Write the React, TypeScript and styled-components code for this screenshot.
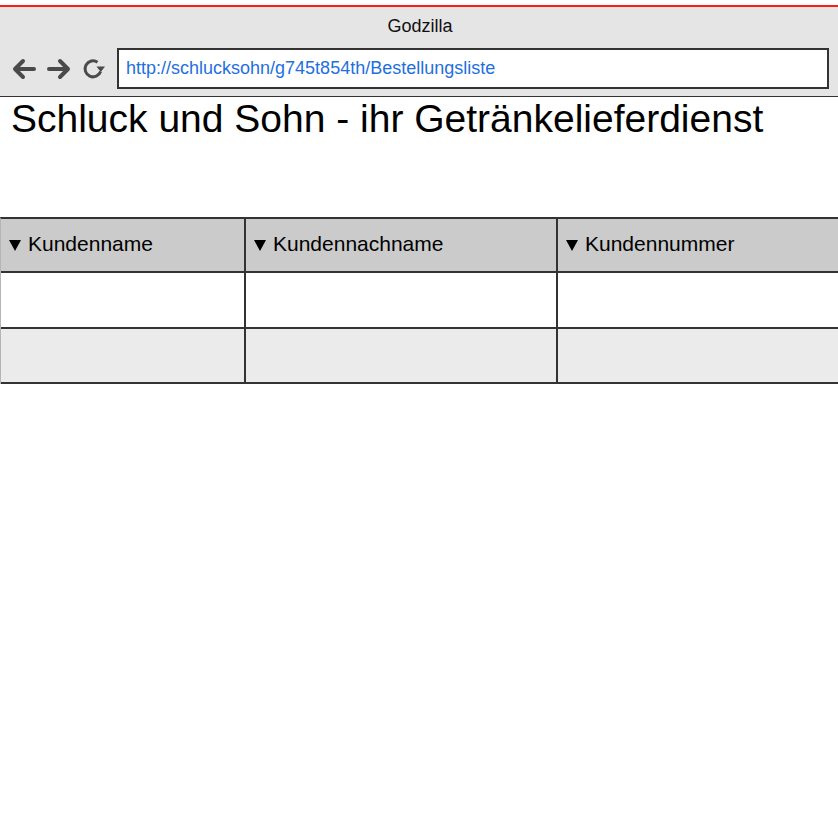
import React from "react";
import styled, { createGlobalStyle } from "styled-components";

const Global = createGlobalStyle`
  html, body { margin: 0; padding: 0; background: #ffffff; }
  body { font-family: "Liberation Sans", Arial, sans-serif; color: #000; overflow: hidden; }
`;

const Page = styled.div`
  width: 838px;
  min-height: 814px;
  padding-top: 5px;
  box-sizing: border-box;
`;

const Chrome = styled.div`
  background: #e5e5e5;
  border-top: 2px solid #ff1a1a;
  border-bottom: 1px solid #333;
  padding: 9px 9px 7px 11px;
  display: flex;
  flex-direction: column;
  gap: 12px;
`;

const WindowTitle = styled.div`
  text-align: center;
  font-size: 18px;
  line-height: 20px;
  color: #111;
`;

const NavRow = styled.div`
  display: flex;
  align-items: center;
  height: 41px;
`;

const NavButton = styled.span<{ $w: number; $gap: number }>`
  display: inline-flex;
  width: ${(p) => p.$w}px;
  margin-right: ${(p) => p.$gap}px;
  color: #4a4a4a;
  svg { display: block; }
`;

const AddressBar = styled.div`
  flex: 1;
  height: 100%;
  box-sizing: border-box;
  background: #fff;
  border: 2px solid #333;
  display: flex;
  align-items: center;
  padding-left: 7px;
  font-size: 18px;
  color: #1f6fe0;
`;

const Heading = styled.h1`
  margin: 0 0 77px 0;
  padding-left: 11px;
  font-weight: normal;
  font-size: 39px;
  line-height: 43px;
`;

const Table = styled.div`
  border-top: 2px solid #333;
  border-left: 1px solid #b5b5b5;
`;

const Row = styled.div<{ $bg: string; $h: number }>`
  display: grid;
  grid-template-columns: 245px 312px 1fr;
  height: ${(p) => p.$h}px;
  box-sizing: border-box;
  background: ${(p) => p.$bg};
  border-bottom: 2px solid #333;
`;

const Cell = styled.div<{ $last?: boolean }>`
  border-right: ${(p) => (p.$last ? "none" : "2px solid #333")};
  display: flex;
  align-items: center;
  padding-left: 8px;
  padding-bottom: 3px;
  font-size: 21px;
  gap: 7px;
`;

const Caret = styled.span`
  width: 0;
  height: 0;
  border-left: 6px solid transparent;
  border-right: 6px solid transparent;
  border-top: 11px solid #000;
  margin-top: 3px;
`;

const BackIcon = () => (
  <svg width="26" height="22" viewBox="0 0 26 22">
    <path d="M23 11 H4 M12 3 L4 11 L12 19" fill="none" stroke="currentColor" strokeWidth="4" strokeLinecap="round" strokeLinejoin="round" />
  </svg>
);

const ForwardIcon = () => (
  <svg width="26" height="22" viewBox="0 0 26 22">
    <path d="M3 11 H22 M14 3 L22 11 L14 19" fill="none" stroke="currentColor" strokeWidth="4" strokeLinecap="round" strokeLinejoin="round" />
  </svg>
);

const ReloadIcon = () => (
  <svg width="24" height="22" viewBox="0 0 24 22">
    <path d="M15.5 4.2 A8 8 0 1 0 18.6 13.5" fill="none" stroke="currentColor" strokeWidth="3" />
    <polygon points="14.5,8.5 23,8.5 18.8,14" fill="currentColor" />
  </svg>
);

const columns = ["Kundenname", "Kundennachname", "Kundennummer"];

export default function App() {
  return (
    <Page>
      <Global />
      <Chrome>
        <WindowTitle>Godzilla</WindowTitle>
        <NavRow>
          <NavButton $w={26} $gap={9}><BackIcon /></NavButton>
          <NavButton $w={26} $gap={10}><ForwardIcon /></NavButton>
          <NavButton $w={24} $gap={11}><ReloadIcon /></NavButton>
          <AddressBar>http://schlucksohn/g745t854th/Bestellungsliste</AddressBar>
        </NavRow>
      </Chrome>
      <Heading>Schluck und Sohn - ihr Getränkelieferdienst</Heading>
      <Table>
        <Row $bg="#cbcbcb" $h={54}>
          {columns.map((c, i) => (
            <Cell key={c} $last={i === 2}>
              <Caret />
              {c}
            </Cell>
          ))}
        </Row>
        <Row $bg="#ffffff" $h={56}>
          <Cell /><Cell /><Cell $last />
        </Row>
        <Row $bg="#ebebeb" $h={55}>
          <Cell /><Cell /><Cell $last />
        </Row>
      </Table>
    </Page>
  );
}
